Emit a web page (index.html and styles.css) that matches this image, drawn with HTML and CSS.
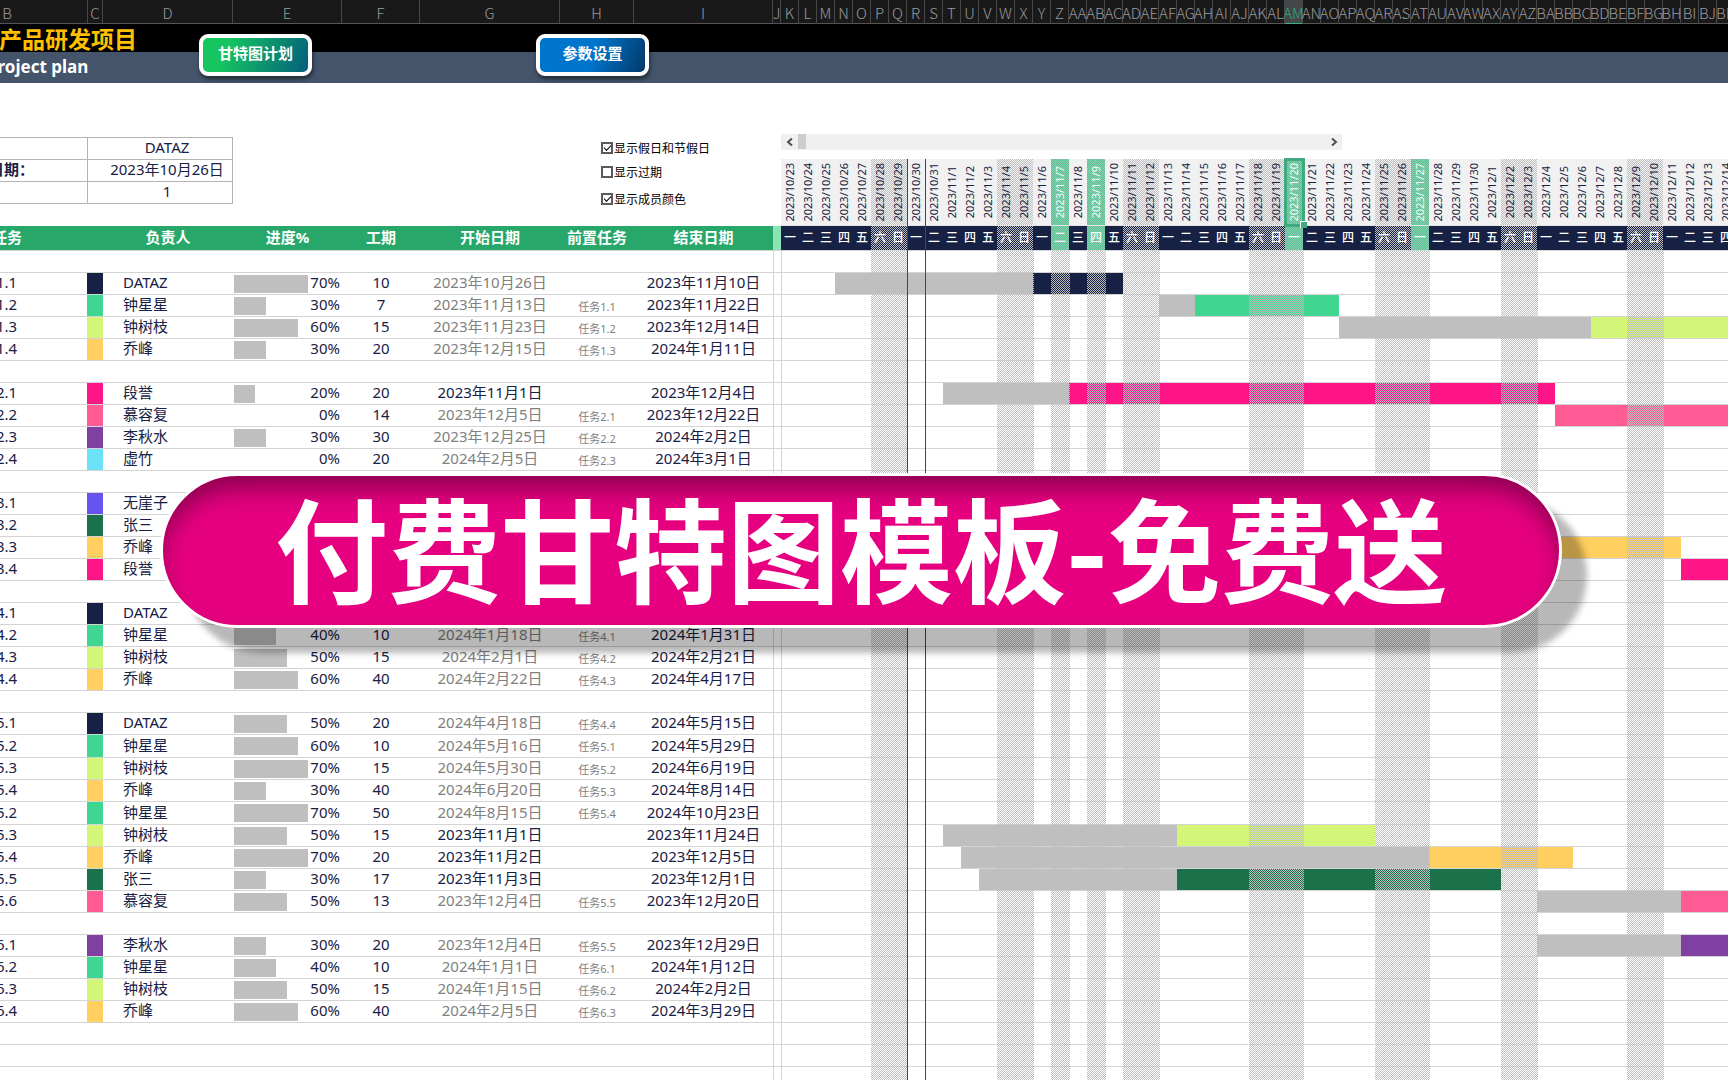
FILE: index.html
```html
<!DOCTYPE html>
<html lang="zh-CN">
<head>
<meta charset="utf-8">
<title>新产品研发项目</title>
<link rel="stylesheet" href="styles.css">
</head>
<body>
<div class="app">
  <div class="colheads">
    <div class="colheads-left"><span>B</span><span>C</span><span>D</span><span>E</span><span>F</span><span>G</span><span>H</span><span>I</span><span>J</span></div>
    <div class="colheads-days" id="letters"></div>
  </div>

  <header class="banner">
    <h1 class="title">新产品研发项目</h1>
    <p class="subtitle">Project plan</p>
    <nav class="actions">
      <button class="action action-plan" type="button">甘特图计划</button>
      <button class="action action-settings" type="button">参数设置</button>
    </nav>
  </header>

  <main class="sheet">
    <section class="left">
      <div class="panel">
        <table class="info">
          <tr><th></th><td>DATAZ</td></tr>
          <tr><th>开始日期：</th><td>2023年10月26日</td></tr>
          <tr><th></th><td>1</td></tr>
        </table>
        <div class="options">
          <label><input type="checkbox" checked>显示假日和节假日</label>
          <label><input type="checkbox">显示过期</label>
          <label class="option-last"><input type="checkbox" checked>显示成员颜色</label>
        </div>
      </div>
      <table class="tasks">
        <colgroup><col class="c-task"><col class="c-color"><col class="c-owner"><col class="c-progress"><col class="c-days"><col class="c-date"><col class="c-prev"><col class="c-end"><col class="c-gap"></colgroup>
        <thead><tr><th>任务</th><th></th><th>负责人</th><th>进度%</th><th>工期</th><th>开始日期</th><th>前置任务</th><th>结束日期</th><th class="gap-head"></th></tr></thead>
        <tbody id="tasks"></tbody>
      </table>
    </section>

    <section class="right">
      <div class="scroller">
        <button type="button" aria-label="向左"><svg width="8" height="8" viewBox="0 0 8 8"><path d="M6 0.5 2 4l4 3.5"/></svg></button>
        <div class="thumb"></div>
        <button type="button" class="scroll-next" aria-label="向右"><svg width="8" height="8" viewBox="0 0 8 8"><path d="M2 0.5 6 4 2 7.5"/></svg></button>
      </div>
      <div class="chart">
        <div class="days dates" id="dates"></div>
        <div class="days weekdays" id="weekdays"></div>
        <div class="bars" id="bars"></div>
        <div class="days today"><span></span></div>
      </div>
    </section>
  </main>

  <div class="promo">付费甘特图模板-免费送</div>
</div>
<script src="app.js"></script>
</body>
</html>
```
FILE: app.js
```js
const DAY_COUNT = 53;
const HOLIDAYS = [15, 17, 28, 35];
const SELECTED = 28;
const START = Date.UTC(2023, 9, 23);
const COLORS = {
  'DATAZ': '#172144', '钟星星': '#40d692', '钟树枝': '#d3f578', '乔峰': '#ffcf60',
  '段誉': '#ff1585', '慕容复': '#ff5c96', '李秋水': '#803fa3', '虚竹': '#6ce2f8',
  '无崖子': '#6555ee', '张三': '#1b7149'
};
// number, owner, progress, days, start, previous task, end, [first day, first open day, end day]
const ROWS = [
  null,
  ['1.1', 'DATAZ', 70, 10, '2023年10月26日', '', '2023年11月10日', [3, 14, 19]],
  ['1.2', '钟星星', 30, 7, '2023年11月13日', '任务1.1', '2023年11月22日', [21, 23, 31]],
  ['1.3', '钟树枝', 60, 15, '2023年11月23日', '任务1.2', '2023年12月14日', [31, 45, 53]],
  ['1.4', '乔峰', 30, 20, '2023年12月15日', '任务1.3', '2024年1月11日'],
  null,
  ['2.1', '段誉', 20, 20, '2023年11月1日', '', '2023年12月4日', [9, 16, 43]],
  ['2.2', '慕容复', 0, 14, '2023年12月5日', '任务2.1', '2023年12月22日', [43, 43, 53]],
  ['2.3', '李秋水', 30, 30, '2023年12月25日', '任务2.2', '2024年2月2日'],
  ['2.4', '虚竹', 0, 20, '2024年2月5日', '任务2.3', '2024年3月1日'],
  null,
  ['3.1', '无崖子'],
  ['3.2', '张三'],
  ['3.3', '乔峰', , , '', '', '', [40, 40, 50]],
  ['3.4', '段誉', , , '', '', '', [50, 50, 53]],
  null,
  ['4.1', 'DATAZ'],
  ['4.2', '钟星星', 40, 10, '2024年1月18日', '任务4.1', '2024年1月31日'],
  ['4.3', '钟树枝', 50, 15, '2024年2月1日', '任务4.2', '2024年2月21日'],
  ['4.4', '乔峰', 60, 40, '2024年2月22日', '任务4.3', '2024年4月17日'],
  null,
  ['5.1', 'DATAZ', 50, 20, '2024年4月18日', '任务4.4', '2024年5月15日'],
  ['5.2', '钟星星', 60, 10, '2024年5月16日', '任务5.1', '2024年5月29日'],
  ['5.3', '钟树枝', 70, 15, '2024年5月30日', '任务5.2', '2024年6月19日'],
  ['5.4', '乔峰', 30, 40, '2024年6月20日', '任务5.3', '2024年8月14日'],
  ['5.2', '钟星星', 70, 50, '2024年8月15日', '任务5.4', '2024年10月23日'],
  ['5.3', '钟树枝', 50, 15, '2023年11月1日', '', '2023年11月24日', [9, 22, 33]],
  ['5.4', '乔峰', 70, 20, '2023年11月2日', '', '2023年12月5日', [10, 36, 44]],
  ['5.5', '张三', 30, 17, '2023年11月3日', '', '2023年12月1日', [11, 22, 40]],
  ['5.6', '慕容复', 50, 13, '2023年12月4日', '任务5.5', '2023年12月20日', [42, 50, 53]],
  null,
  ['6.1', '李秋水', 30, 20, '2023年12月4日', '任务5.5', '2023年12月29日', [42, 50, 53]],
  ['6.2', '钟星星', 40, 10, '2024年1月1日', '任务6.1', '2024年1月12日'],
  ['6.3', '钟树枝', 50, 15, '2024年1月15日', '任务6.2', '2024年2月2日'],
  ['6.4', '乔峰', 60, 40, '2024年2月5日', '任务6.3', '2024年3月29日'],
  null, null, null
];

const isOff = i => i % 7 > 4;
const dayClass = i =>
  (HOLIDAYS.includes(i) ? 'holiday' : isOff(i) ? 'off' : '') + (i === SELECTED ? ' selected' : '');

function columnName(n) {
  let s = '';
  for (n += 1; n > 0; n = Math.floor((n - 1) / 26)) s = String.fromCharCode(65 + (n - 1) % 26) + s;
  return s;
}

const rowClass = r => (r && r[0] === '5.2' ? ' class="tall"' : '');

function taskRow(r) {
  if (!r) return '<tr>' + '<td></td>'.repeat(8) + '<td class="gap"></td></tr>';
  const [no, owner, pct, days, start, prev, end] = r;
  const fixed = !prev && no !== '1.1';
  const progress = pct === undefined ? '' :
    `<div class="progress"><i style="width:${pct}%"></i><span>${pct}%</span></div>`;
  return `<tr${rowClass(r)}><td class="task">任务${no}</td><td style="background:${COLORS[owner]}"></td>` +
    `<td class="owner">${owner}</td><td class="meter">${progress}</td><td>${days ?? ''}</td>` +
    `<td class="${fixed ? '' : 'auto'}">${start ?? ''}</td><td class="prev">${prev ?? ''}</td>` +
    `<td>${end ?? ''}</td><td class="gap"></td></tr>`;
}

function barRow(r) {
  let inner = '';
  if (r && r[7]) {
    const [a, b, c] = r[7];
    if (b > a) inner += `<i class="done" style="grid-column:${a + 1}/${b + 1}"></i>`;
    inner += `<i style="grid-column:${b + 1}/${c + 1};background:${COLORS[r[1]]}"></i>`;
  }
  return `<div class="days bar-row${r && r[0] === '5.2' ? ' tall' : ''}">${inner}</div>`;
}

const days = [...Array(DAY_COUNT).keys()];
const fill = (id, html) => { document.getElementById(id).innerHTML = html; };

fill('letters', days.map(i => `<span class="${i === SELECTED ? 'active' : ''}">${columnName(i + 10)}</span>`).join(''));
fill('dates', days.map(i => {
  const d = new Date(START + i * 864e5);
  return `<span class="${dayClass(i)}"><b>${d.getUTCFullYear()}/${d.getUTCMonth() + 1}/${d.getUTCDate()}</b></span>`;
}).join(''));
fill('weekdays', days.map(i => `<span class="${dayClass(i)}">${'一二三四五六日'[i % 7]}</span>`).join(''));
fill('tasks', ROWS.map(taskRow).join(''));
fill('bars', ROWS.map(barRow).join('') +
  '<div class="days shade">' + days.map(i => `<span class="${dayClass(i) ? 'off' : ''}"></span>`).join('') + '</div>');
```
FILE: styles.css
```css
:root {
  --line: #d4d4d4;
  --navy: #172144;
  --green: #28a76b;
  --gray: #bfbfbf;
  --hatch: repeating-conic-gradient(#bfbfbf 0 25%, transparent 0 50%) 0 0 / 2px 2px;
}
* { box-sizing: border-box; }
body {
  margin: 0;
  background: #fff;
  color: var(--navy);
  font: 15px/20px "Noto Sans", "Noto Sans CJK SC", sans-serif;
}
.app { position: relative; height: 100vh; overflow: hidden; }

.colheads {
  display: flex;
  height: 24px;
  margin-left: -73px;
  background: #191919;
  border-bottom: 1px solid #555;
  color: #9a9a9a;
  font: 300 15px/21px "Noto Sans CJK SC", sans-serif;
}
.colheads-left {
  flex: none;
  display: grid;
  grid-template-columns: 161px 15px 130px 109px 78px 140px 74px 139px 8px;
}
.colheads-days { display: grid; grid-template-columns: repeat(53, 18px); }
.colheads span {
  display: flex;
  justify-content: center;
  padding-top: 2px;
  border-right: 1px solid #484848;
  white-space: nowrap;
}
.colheads .active {
  background: #43474a;
  color: #2fae7c;
  border-bottom: 2px solid #3fae82;
}

.banner {
  position: relative;
  height: 59px;
  background: linear-gradient(#000 28px, #44546a 28px);
}
.title {
  margin: 0 0 0 -24px;
  height: 28px;
  color: #ffc000;
  font: 700 23px/28px "Noto Sans CJK SC", sans-serif;
}
.subtitle {
  margin: 0 0 0 -13px;
  color: #fff;
  font: 700 17px/30px "Noto Sans", sans-serif;
}
.actions {
  position: absolute;
  top: 10px;
  left: 199px;
  display: flex;
  gap: 224px;
}
.action {
  width: 113px;
  height: 42px;
  padding: 0 0 4px;
  border: 4px solid #fff;
  border-radius: 9px;
  box-shadow: 1px 3px 4px rgba(0, 0, 0, .5);
  color: #fff;
  font: 700 15px/20px "Noto Sans CJK SC", sans-serif;
}
.action-plan { background: linear-gradient(110deg, #16c460 25%, #02587f) border-box; }
.action-settings { background: linear-gradient(110deg, #0075cc 50%, #02335f) border-box; }

.sheet { display: flex; margin-left: -73px; }
.left { flex: none; width: 854px; }
.right { flex: 1; min-width: 0; overflow: hidden; padding-top: 51px; }

.panel { display: flex; height: 143px; padding-top: 54px; }
.info {
  align-self: flex-start;
  width: 306px;
  table-layout: fixed;
  border-collapse: collapse;
}
.info th, .info td { height: 22px; padding: 0 0 2px; border: 1px solid #b4b4b4; line-height: 19px; }
.info th { width: 160px; padding-left: 31px; text-align: left; }
.info td { padding-left: 14px; text-align: center; }
.options {
  display: flex;
  flex-direction: column;
  margin: -1px 0 0 368px;
  color: #000;
  font: 12px/24px "Noto Sans CJK SC", sans-serif;
}
.options label { display: flex; align-items: center; gap: 1px; height: 24px; }
.options .option-last { margin-top: 3px; }
.options input {
  appearance: none;
  display: grid;
  place-content: center;
  width: 12px;
  height: 12px;
  margin: 0;
  border: 2px solid #5a5a5a;
  background: #fff;
}
.options input:checked::before {
  content: "";
  width: 6px;
  height: 3px;
  margin-bottom: 2px;
  border: solid #000;
  border-width: 0 0 1px 1px;
  transform: rotate(-45deg);
}

.tasks {
  width: 854px;
  table-layout: fixed;
  border-collapse: separate;
  border-spacing: 0;
}
.c-task { width: 160px; }
.c-color { width: 16px; }
.c-owner { width: 130px; }
.c-progress { width: 109px; }
.c-days { width: 78px; }
.c-date { width: 140px; }
.c-prev { width: 74px; }
.c-end { width: 139px; }
.c-gap { width: 8px; }
.tasks th {
  height: 25px;
  padding: 0 0 2px;
  background: var(--green);
  border-bottom: 1px solid var(--line);
  color: #fff;
}
.tasks .gap-head { background: #8ce3b6; }
.tasks td {
  height: 22px;
  padding: 0 0 2px;
  border-bottom: 1px solid var(--line);
  line-height: 19px;
  text-align: center;
  white-space: nowrap;
}
.tasks .tall td { height: 23px; }
.tasks .task { padding-left: 39px; text-align: left; }
.tasks .owner { padding-left: 20px; text-align: left; }
.tasks .auto { color: #808080; }
.tasks .prev { padding-top: 1px; padding-bottom: 0; color: #808080; font-size: 11px; }
.tasks .gap { border-left: 1px solid var(--line); }
.tasks .meter { padding: 0; }
.progress { display: flex; align-items: center; width: 106px; margin-left: 1px; }
.progress i { flex: none; height: 18px; background: var(--gray); }
.progress span { margin-left: auto; padding-bottom: 2px; }

.scroller {
  display: flex;
  width: 561px;
  height: 16px;
  background: #f0f0f0;
}
.scroller button {
  display: grid;
  place-content: center;
  width: 17px;
  padding: 0;
  border: 0;
  background: none;
}
.scroller svg { fill: none; stroke: #505050; stroke-width: 2; }
.scroller .thumb { width: 8px; height: 15px; background: #cdcdcd; }
.scroller .scroll-next { margin-left: auto; }

.chart { position: relative; margin-top: 9px; }
.days { display: grid; grid-template-columns: repeat(53, 18px); }
.dates { height: 67px; background: #f1f1f1; border-bottom: 1px solid #e4e4e4; }
.dates span { display: flex; align-items: center; justify-content: center; }
.dates b {
  font-weight: 400;
  font-size: 11px;
  line-height: 18px;
  writing-mode: vertical-rl;
  transform: rotate(180deg);
}
.off { background: var(--hatch); }
.dates .holiday, .weekdays .holiday {
  background: repeating-conic-gradient(#8ccbb0 0 25%, #58c496 0 50%) 0 0 / 2px 2px;
  color: #f0fff6;
}
.dates .selected { position: relative; }
.dates .selected::before {
  content: "";
  position: absolute;
  inset: -1px -2px -2px -1px;
  border: 3px solid #3fa980;
}
.dates .selected::after {
  content: "";
  position: absolute;
  right: -4px;
  bottom: -3px;
  width: 6px;
  height: 6px;
  border: solid #fff;
  border-width: 1px 0 0 1px;
  background: #3fa980;
}
.weekdays {
  height: 25px;
  background: var(--navy);
  border-bottom: 1px solid var(--line);
  color: #fff;
  font-size: 12px;
  font-weight: 500;
  line-height: 23px;
  text-align: center;
}
.bars { position: relative; }
.bar-row { height: 22px; border-bottom: 1px solid var(--line); }
.bar-row.tall { height: 23px; }
.done { background: var(--gray); }
.shade { position: absolute; inset: 0; border-left: 1px solid var(--line); }
.shade span { margin-left: -1px; }
.today { position: absolute; inset: 0; }
.today span {
  grid-column: 8;
  margin-right: -1px;
  border: solid #b8160e;
  border-width: 0 1px;
}

.promo {
  position: absolute;
  top: 473px;
  left: 160px;
  right: 166px;
  height: 155px;
  border: 3px solid #fff;
  border-radius: 78px;
  background: #e6007f;
  box-shadow: 25px 25px 6px rgba(0, 0, 0, .28), inset 0 16px 24px -4px rgba(60, 0, 40, .55);
  color: #fff;
  font: 700 113px/138px "Noto Sans CJK SC", sans-serif;
  text-align: center;
  white-space: nowrap;
}
```
